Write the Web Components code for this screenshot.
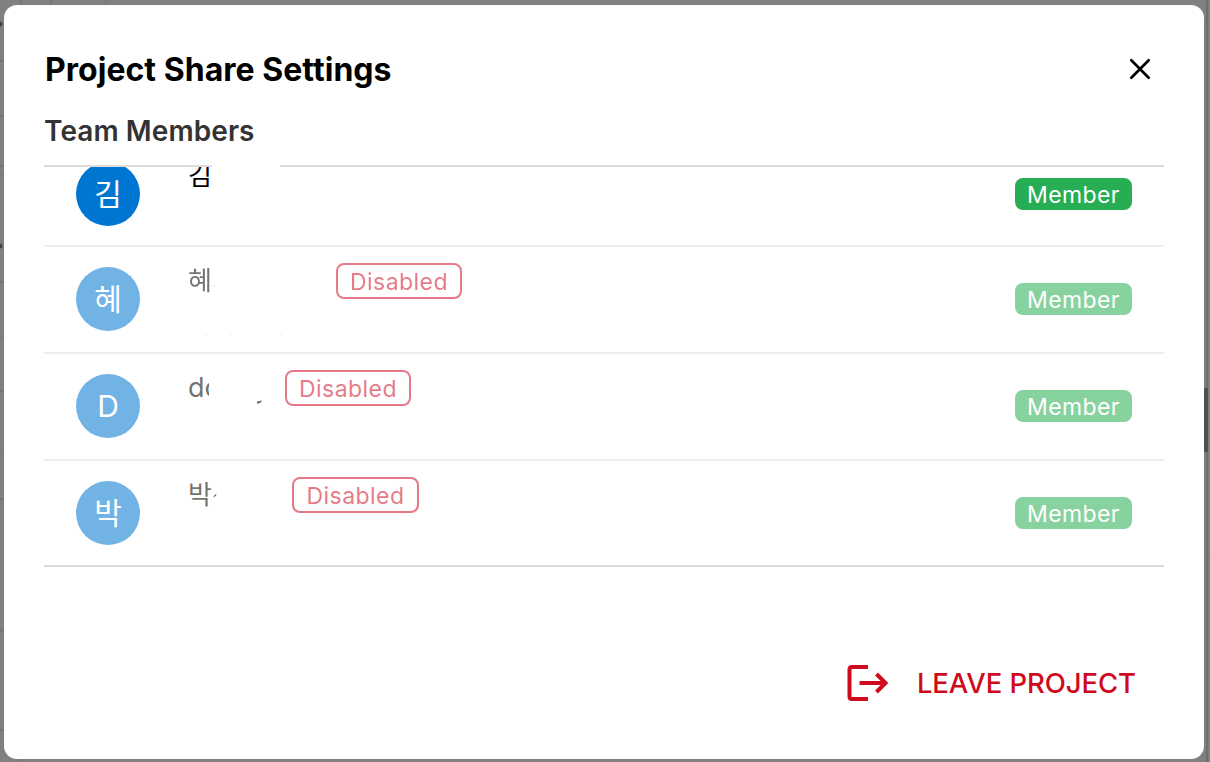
<!DOCTYPE html>
<html lang="en">
<head>
<meta charset="utf-8">
<title>Project Share Settings</title>
<style>
html,body{margin:0;height:100%;overflow:hidden}
body{font-family:Inter,"Noto Sans CJK KR",sans-serif;background:#808080}
</style>
</head>
<body>
<share-page></share-page>
<script>
const define = (name, html, setup) => customElements.define(name, class extends HTMLElement {
  connectedCallback() {
    if (this.shadowRoot) return;
    const root = this.attachShadow({ mode: 'open' });
    const t = document.createElement('template');
    t.innerHTML = html;
    root.append(t.content.cloneNode(true));
    if (setup) setup(this, root);
  }
});

define('canvas-backdrop', `
<style>:host{display:block;position:absolute;inset:0}svg{display:block}</style>
<svg width="1210" height="762" viewBox="0 0 1210 762">
  <rect width="1210" height="762" fill="#808080"/>
  <g fill="#76767a"><rect x="20" width="2" height="762"/><rect y="628" width="4" height="4"/><rect x="1206" width="2" height="762" fill="#6e6e74"/></g>
  <g fill="#777"><rect y="60" width="4" height="2"/><rect y="115" width="4" height="2"/><rect y="165" width="4" height="2"/><rect y="175" width="4" height="1"/><rect y="281" width="4" height="2"/><rect y="336" width="4" height="1"/><rect y="390" width="4" height="2"/><rect y="451" width="4" height="1"/><rect y="498" width="4" height="2"/><rect y="729" width="4" height="2"/><rect x="50" width="2" height="5"/><rect x="105" width="1" height="5"/><rect x="1208" y="553" width="2" height="2"/></g>
  <g fill="#444"><circle cy="24" r="2.5"/><circle cy="246" r="2.5"/></g>
  <rect x="1204" y="388" width="4" height="64" fill="#4f4f4f"/>
</svg>`);

define('user-avatar', `
<style>:host{display:flex;flex:none;width:64px;height:64px;border-radius:50%;background:#0076d3;color:#fff;font-size:30px;line-height:65px;justify-content:center}</style>
<slot></slot>`);

define('role-badge', `
<style>:host{display:block;flex:none;box-sizing:border-box;width:117px;height:32px;border-radius:8px;background:#27ae54;color:#fff;font-size:23px;line-height:34px;letter-spacing:.4px;text-align:center;white-space:nowrap}</style>
<slot></slot>`);

define('status-tag', `
<style>:host{display:block;flex:none;box-sizing:border-box;width:var(--tag,126px);height:36px;border:2px solid #d20d26;border-radius:8px;color:#d20d26;font-size:23px;line-height:34px;letter-spacing:.45px;text-align:center;white-space:nowrap}</style>
<slot></slot>`);

define('member-row', `
<style>
:host{display:flex;box-sizing:border-box;height:107px;padding:20px 32px 0;border-bottom:2px solid #eee;align-items:flex-start}
:host([first]){height:105px;margin-top:-25px}
:host([last]){border-bottom:0}
:host([disabled]) .fade{opacity:.55}
.info{display:flex;flex:1;margin:-4px 0 0 48px;height:36px}
.name{flex:none;width:var(--space);position:relative;font-size:var(--size,26px);line-height:36px;color:#000}
.name span{display:block;overflow:hidden;width:var(--show,26px);white-space:nowrap}
.name svg{position:absolute;left:0;top:0;overflow:visible}
role-badge{margin-top:16px}
</style>
<user-avatar class="fade"></user-avatar>
<div class="info fade"><div class="name"><span></span><svg width="1" height="1"><path class="mark" fill="#000"/><path class="faint" fill="#ddd"/></svg></div></div>
<role-badge class="fade">Member</role-badge>`, (el, root) => {
  root.querySelector('user-avatar').textContent = el.getAttribute('initial');
  root.querySelector('.name span').textContent = el.getAttribute('name');
  root.querySelector('.mark').setAttribute('d', el.getAttribute('trace') || '');
  root.querySelector('.faint').setAttribute('d', el.getAttribute('faint') || '');
  if (el.hasAttribute('disabled')) {
    const tag = document.createElement('status-tag');
    tag.textContent = 'Disabled';
    root.querySelector('.info').append(tag);
  }
});

define('member-list', `
<style>
:host{display:block;box-sizing:border-box;height:402px;overflow:hidden;border-bottom:2px solid #ddd}
.top{display:grid;grid-template-columns:168px 68px 1fr;height:2px}
.top i{background:#ddd}.top i:nth-child(2){background:none}
.view{height:398px;overflow:hidden;display:flow-root}
</style>
<div class="top"><i></i><i></i><i></i></div><div class="view"><slot></slot></div>`);

define('close-button', `
<style>:host{display:block;width:24px;height:24px}svg{display:block}</style>
<svg width="24" height="24" viewBox="0 0 24 24"><path d="M3.300 3.300L20.700 20.700M20.700 3.300L3.300 20.700" fill="none" stroke="#000" stroke-width="2.700" stroke-linecap="round"/></svg>`);

define('leave-button', `
<style>:host{display:flex;align-items:center;gap:28px;color:#cf0a1c;font-size:27.5px;line-height:36px;font-weight:450;letter-spacing:-.08px;white-space:nowrap}svg{display:block;flex:none}span{padding-top:1px}</style>
<svg width="42" height="36" viewBox="0 0 42 36" fill="none" stroke="currentColor" stroke-width="4"><path d="M21 2H5Q2.500 2 2.500 4.500V31.500Q2.500 34 5 34H21"/><path d="M12.500 18H38M29.500 9L38.500 18L29.500 27"/></svg>
<span><slot></slot></span>`);

define('share-dialog', `
<style>
:host{display:flex;flex-direction:column;box-sizing:border-box;width:1200px;height:754px;padding:40px;background:#fff;border-radius:13px;position:relative}
header{display:flex;justify-content:space-between;align-items:center;height:48px;padding-right:12px}
h1{margin:0;padding:2px 0 0 1px;font-size:32px;line-height:48px;font-weight:700;color:#000;letter-spacing:.03px;white-space:nowrap}
h2{margin:16px 0 0;height:56px;font-size:28px;line-height:45px;font-weight:600;color:#333;letter-spacing:.08px}
footer{display:flex;justify-content:flex-end;margin-top:97px;padding-right:28px}
</style>
<header><h1>Project Share Settings</h1><close-button></close-button></header>
<h2>Team Members</h2>
<slot></slot>
<footer><leave-button>LEAVE PROJECT</leave-button></footer>`);

define('share-page', `
<style>:host{display:block;box-sizing:border-box;position:relative;width:1210px;height:762px;padding:5px 0 0 4px}</style>
<canvas-backdrop></canvas-backdrop>
<share-dialog><member-list>
  <member-row first initial="김" name="김" style="--space:148px"></member-row>
  <member-row disabled initial="혜" name="혜" faint="M25.500 8H26.500V10H25.500ZM25 22H27V24H25ZM16 71H19V72H16ZM42 71H44V72H42ZM92 71H94V72H92Z" style="--space:148px"></member-row>
  <member-row disabled initial="D" name="do" trace="M69 31.500L74 30.500L73 32.500L69 34Z" style="--space:97px;--show:21px;--size:27px"></member-row>
  <member-row disabled last initial="박" name="박" trace="M25.500 19L28.500 16.500L28 18.500L26 20.500Z" style="--space:104px;--tag:127px"></member-row>
</member-list></share-dialog>`);
</script>
</body>
</html>
